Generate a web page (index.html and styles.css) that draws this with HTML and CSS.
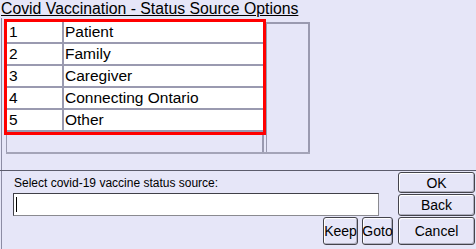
FILE: index.html
```html
<!DOCTYPE html>
<html>
<head>
<meta charset="utf-8">
<link rel="stylesheet" href="styles.css">
</head>
<body>
<div class="title">Covid Vaccination - Status Source Options</div>
<div class="frame">
  <div class="listpane">
    <div class="grid">
      <div class="col1">
        <table class="opts">
          <tr><td class="num">1</td><td class="txt">Patient</td></tr>
          <tr><td class="num">2</td><td class="txt">Family</td></tr>
          <tr><td class="num">3</td><td class="txt">Caregiver</td></tr>
          <tr><td class="num">4</td><td class="txt">Connecting Ontario</td></tr>
          <tr><td class="num">5</td><td class="txt">Other</td></tr>
        </table>
      </div>
      <div class="col2"></div>
    </div>
  </div>
  <div class="bottom">
    <div class="rowa">
      <div class="entry">
        <div class="prompt">Select covid-19 vaccine status source:</div>
        <div class="input"><span class="caret"></span></div>
      </div>
      <div class="stack">
        <div class="btn ok">OK</div>
        <div class="btn back">Back</div>
      </div>
    </div>
    <div class="rowb">
      <div class="btn keep">Keep</div>
      <div class="btn goto">Goto</div>
      <div class="btn cancel">Cancel</div>
    </div>
  </div>
</div>
</body>
</html>
```
FILE: styles.css
```css
html, body {
  margin: 0;
  padding: 0;
}
body {
  width: 476px;
  height: 249px;
  overflow: hidden;
  background: #e6e6f8;
  font-family: "Liberation Sans", Arial, sans-serif;
  color: #000;
}
.title {
  height: 18px;
  padding-left: 1px;
  font-size: 15.8px;
  line-height: 18px;
  text-decoration: underline;
  white-space: nowrap;
}
.frame {
  margin-left: 1px;
  border-left: 1px solid #8c8ca4;
  height: 231px;
}
.listpane {
  height: 152px;
  padding-top: 2px;
  box-sizing: border-box;
}
.grid {
  margin-left: 4px;
  width: 304px;
  height: 134px;
  display: flex;
  border-bottom: 2px solid #a4a4b8;
  box-sizing: border-box;
}
.col1 {
  width: 258px;
  border-left: 1px solid #9a9ab0;
  border-right: 2px solid #9a9ab0;
  box-sizing: border-box;
}
.col2 {
  flex: 1;
  margin-left: 2px;
  margin-top: 2px;
  border-left: 1px solid #9a9ab0;
  border-right: 2px solid #9a9ab0;
  border-top: 2px solid #9a9ab0;
}
.opts {
  border-collapse: collapse;
  width: 256px;
  margin-top: 2px;
  margin-left: 0;
  background: #fff;
  outline: 3px solid #ff0000;
  font-size: 15.5px;
}
.opts td {
  height: 20px;
  padding: 0 0 0 1px;
  border-bottom: 2px solid #9a9ab0;
  line-height: 20px;
  white-space: nowrap;
}
.opts td.num {
  width: 53px;
  padding-left: 2px;
  border-right: 2px solid #9a9ab0;
}
.bottom {
  border-top: 1px solid #5c5c6c;
  margin-left: -2px;
}
.rowa {
  display: flex;
  justify-content: space-between;
}
.entry {
  margin-left: 13px;
  width: 366px;
}
.prompt {
  font-size: 12px;
  height: 22px;
  line-height: 14px;
  padding-top: 5px;
  padding-left: 1px;
  box-sizing: border-box;
  white-space: nowrap;
}
.input {
  height: 23px;
  background: #fff;
  border: 1px solid #404048;
  border-right-color: #8a8a90;
  border-bottom-color: #8a8a90;
  box-sizing: border-box;
  display: flex;
  align-items: center;
  padding-left: 2px;
}
.caret {
  width: 1px;
  height: 15px;
  background: #000;
}
.stack {
  width: 77px;
  margin-right: 1px;
  padding-top: 1px;
  display: flex;
  flex-direction: column;
  gap: 1px;
}
.btn {
  box-sizing: border-box;
  border: 1px solid #44444c;
  border-radius: 3px;
  box-shadow: inset 1px 1px 0 #ffffff, inset -1px -1px 0 #b0b0c0;
  display: flex;
  align-items: center;
  justify-content: center;
  font-size: 14px;
}
.ok { height: 21px; }
.back { height: 22px; }
.rowb {
  display: flex;
  justify-content: flex-end;
  margin-top: 1px;
  margin-right: 1px;
}
.keep { width: 35px; height: 28px; }
.goto { width: 31px; height: 28px; margin-left: 4px; }
.cancel { width: 77px; height: 28px; margin-left: 5px; }
```
